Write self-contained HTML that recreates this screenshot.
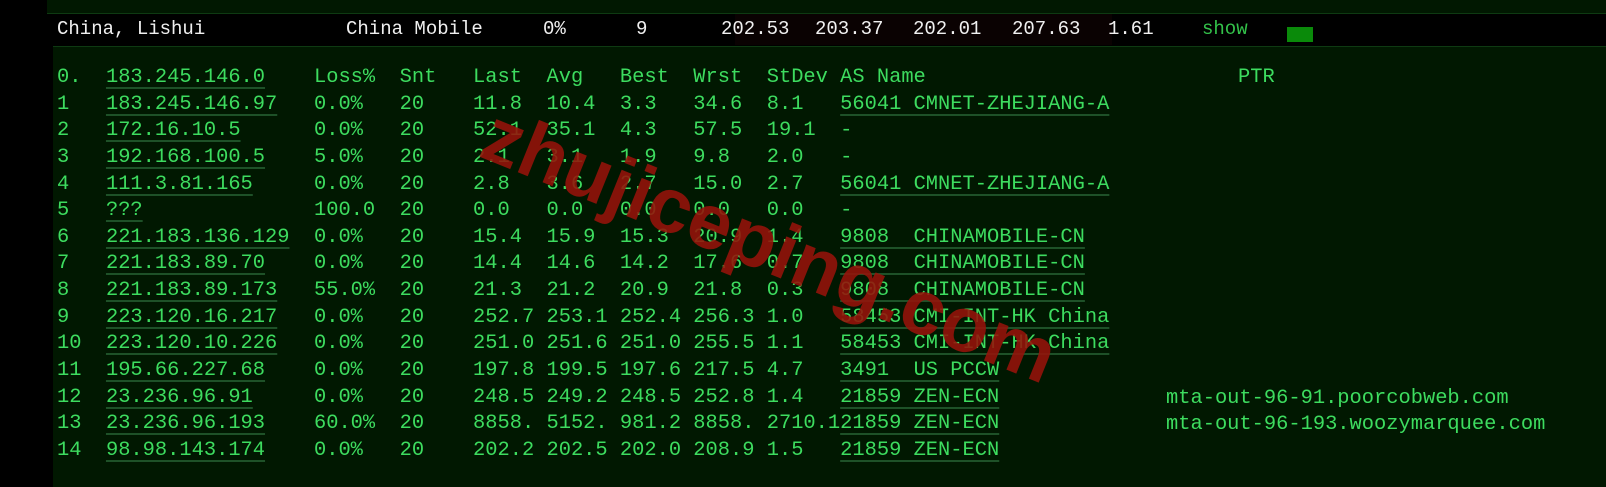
<!DOCTYPE html>
<html><head><meta charset="utf-8"><style>
html,body{margin:0;padding:0;width:1606px;height:487px;overflow:hidden;background:#000;}
#panel{position:absolute;left:47px;top:0;width:1559px;height:487px;background:#011801;}
#bar{position:absolute;left:47px;top:13px;width:1559px;height:32px;background:#000;border-top:1px solid #0e3a12;border-bottom:1px solid #0e3a12;}
#redbg{position:absolute;left:735px;top:14px;width:377px;height:31px;background:#0a0202;}
.t{position:absolute;top:17px;font-family:"Liberation Mono",monospace;font-size:19px;color:#f0f0f0;line-height:24px;}
#leftblk{position:absolute;left:47px;top:46px;width:6px;height:441px;background:#000;}
pre{position:absolute;left:57px;top:65px;margin:0;font-family:"Liberation Mono",monospace;font-size:20.4px;line-height:26.64px;color:#3ddc5f;}
u{text-decoration:underline;text-decoration-color:#1e5128;text-decoration-thickness:2px;text-underline-offset:5px;}
.p{position:absolute;font-family:"Liberation Mono",monospace;font-size:20.4px;line-height:26.64px;color:#3ddc5f;}
#wm{position:absolute;left:450px;top:205px;width:640px;text-align:center;font-family:"Liberation Sans",sans-serif;font-weight:bold;font-size:78px;color:rgba(150,18,10,0.88);transform:rotate(22deg);transform-origin:50% 50%;line-height:80px;white-space:nowrap;}
</style></head><body>
<div id="panel"></div>
<div id="bar"></div>
<div id="redbg"></div>
<div id="leftblk"></div>
<span class="t" style="left:57px">China, Lishui</span>
<span class="t" style="left:346px">China Mobile</span>
<span class="t" style="left:543px">0%</span>
<span class="t" style="left:636px">9</span>
<span class="t" style="left:721px">202.53</span>
<span class="t" style="left:815px">203.37</span>
<span class="t" style="left:913px">202.01</span>
<span class="t" style="left:1012px">207.63</span>
<span class="t" style="left:1108px">1.61</span>
<span class="t" style="left:1202px;color:#33c24a">show</span>
<div style="position:absolute;left:1287px;top:27px;width:26px;height:15px;background:#0a8a0a"></div>
<pre>0.  <u>183.245.146.0</u>    Loss%  Snt   Last  Avg   Best  Wrst  StDev AS Name
1   <u>183.245.146.97</u>   0.0%   20    11.8  10.4  3.3   34.6  8.1   <u>56041 CMNET-ZHEJIANG-A</u>
2   <u>172.16.10.5</u>      0.0%   20    52.1  35.1  4.3   57.5  19.1  -
3   <u>192.168.100.5</u>    5.0%   20    2.1   3.1   1.9   9.8   2.0   -
4   <u>111.3.81.165</u>     0.0%   20    2.8   3.6   2.7   15.0  2.7   <u>56041 CMNET-ZHEJIANG-A</u>
5   <u>???</u>              100.0  20    0.0   0.0   0.0   0.0   0.0   -
6   <u>221.183.136.129</u>  0.0%   20    15.4  15.9  15.3  20.9  1.4   <u>9808  CHINAMOBILE-CN</u>
7   <u>221.183.89.70</u>    0.0%   20    14.4  14.6  14.2  17.6  0.7   <u>9808  CHINAMOBILE-CN</u>
8   <u>221.183.89.173</u>   55.0%  20    21.3  21.2  20.9  21.8  0.3   <u>9808  CHINAMOBILE-CN</u>
9   <u>223.120.16.217</u>   0.0%   20    252.7 253.1 252.4 256.3 1.0   <u>58453 CMI-INT-HK China</u>
10  <u>223.120.10.226</u>   0.0%   20    251.0 251.6 251.0 255.5 1.1   <u>58453 CMI-INT-HK China</u>
11  <u>195.66.227.68</u>    0.0%   20    197.8 199.5 197.6 217.5 4.7   <u>3491  US PCCW</u>
12  <u>23.236.96.91</u>     0.0%   20    248.5 249.2 248.5 252.8 1.4   <u>21859 ZEN-ECN</u>
13  <u>23.236.96.193</u>    60.0%  20    8858. 5152. 981.2 8858. 2710.1<u>21859 ZEN-ECN</u>
14  <u>98.98.143.174</u>    0.0%   20    202.2 202.5 202.0 208.9 1.5   <u>21859 ZEN-ECN</u></pre>
<span class="p" style="left:1238px;top:65px">PTR</span>
<span class="p" style="left:1166px;top:385.6px">mta-out-96-91.poorcobweb.com</span>
<span class="p" style="left:1166px;top:412.2px">mta-out-96-193.woozymarquee.com</span>
<div id="wm">zhujiceping.com</div>
</body></html>
